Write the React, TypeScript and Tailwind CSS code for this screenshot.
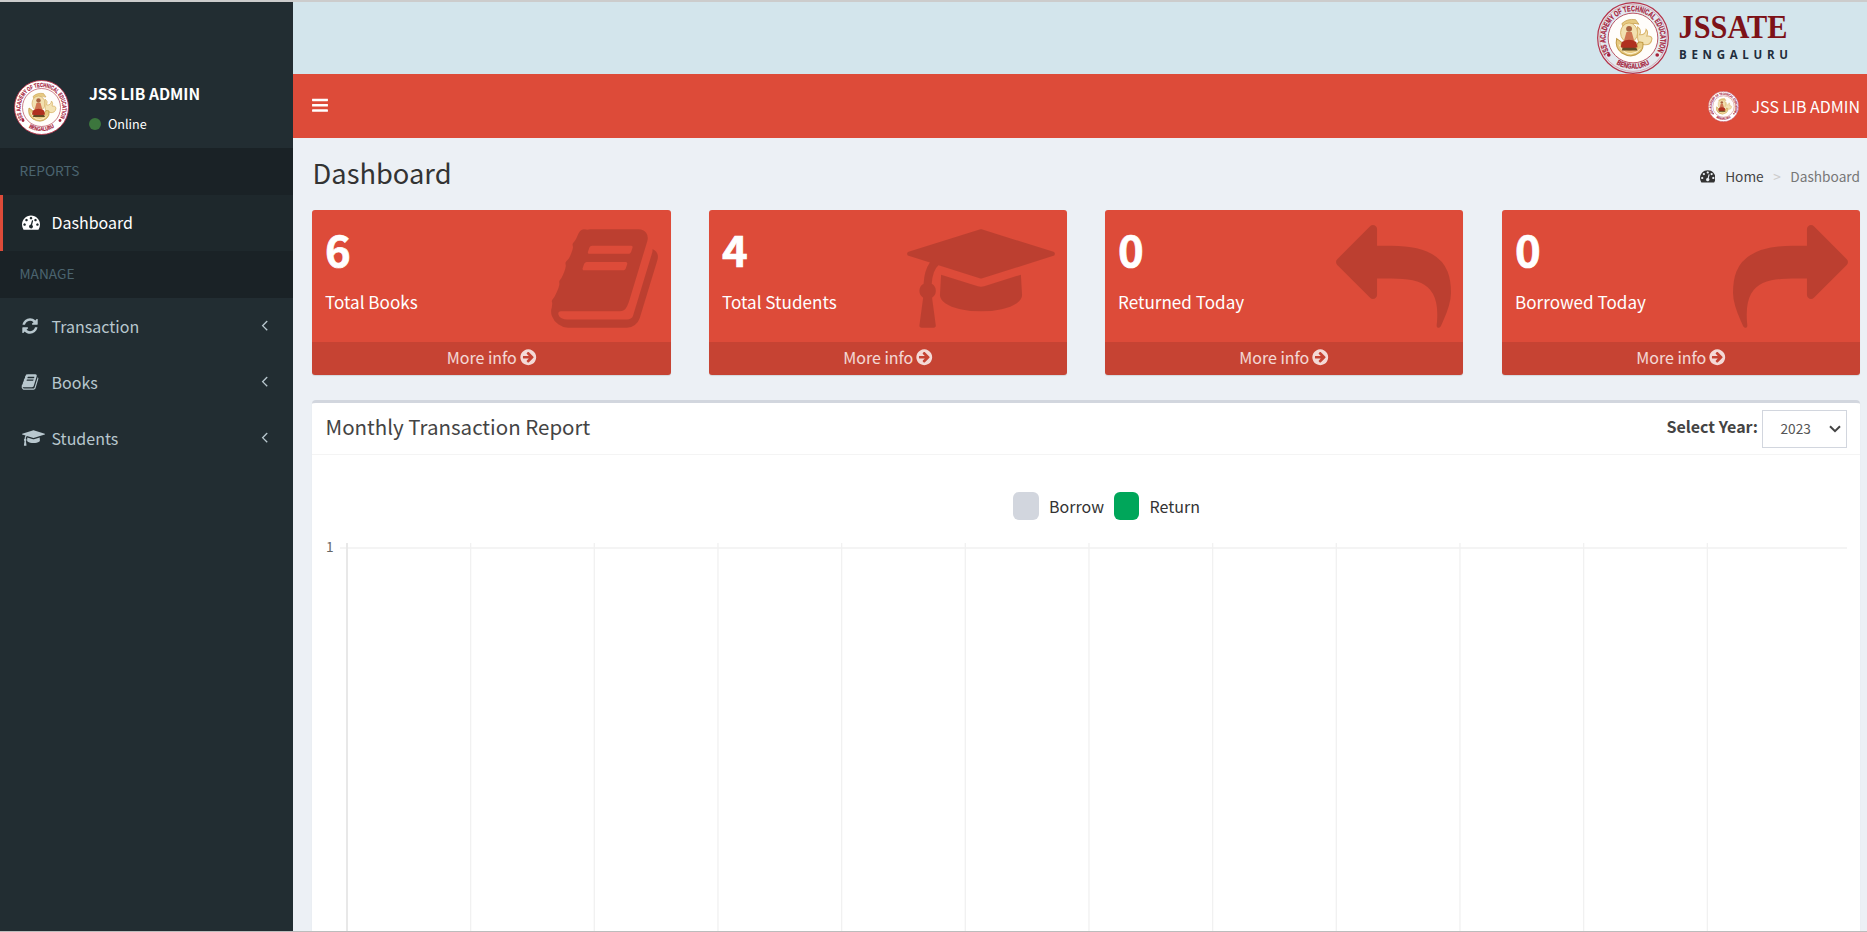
import type { ReactNode } from "react";

type IconName = "dashboard" | "refresh" | "book" | "cap" | "arrowCircle" | "reply" | "share" | "angleLeft" | "bars";

const ICONS: Record<IconName, { width: number; path: string }> = {
  dashboard: {
    width: 1792,
    path: "M384 1152q0-53-37.5-90.5t-90.5-37.5-90.5 37.5-37.5 90.5 37.5 90.5 90.5 37.5 90.5-37.5 37.5-90.5zm192-448q0-53-37.5-90.5t-90.5-37.5-90.5 37.5-37.5 90.5 37.5 90.5 90.5 37.5 90.5-37.5 37.5-90.5zm428 481l101-382q6-26-7.5-48.5t-38.5-29.5-48 6.5-30 39.5l-101 382q-60 5-107 43.5t-63 98.5q-20 77 20 146t117 89 146-20 89-117q16-60-6-117t-72-91zm660-33q0-53-37.5-90.5t-90.5-37.5-90.5 37.5-37.5 90.5 37.5 90.5 90.5 37.5 90.5-37.5 37.5-90.5zm-640-640q0-53-37.5-90.5t-90.5-37.5-90.5 37.5-37.5 90.5 37.5 90.5 90.5 37.5 90.5-37.5 37.5-90.5zm448 192q0-53-37.5-90.5t-90.5-37.5-90.5 37.5-37.5 90.5 37.5 90.5 90.5 37.5 90.5-37.5 37.5-90.5zm320 448q0 261-141 483-19 29-54 29h-1402q-35 0-54-29-141-221-141-483 0-182 71-348t191-286 286-191 348-71 348 71 286 191 191 286 71 348z",
  },
  refresh: {
    width: 1792,
    path: "M1639 1056q0 5-1 7-64 268-268 434.5t-478 166.5q-146 0-282.5-55t-243.5-157l-129 129q-19 19-45 19t-45-19-19-45v-448q0-26 19-45t45-19h448q26 0 45 19t19 45-19 45l-137 137q71 66 161 102t187 36q134 0 250-65t186-179q11-17 53-117 8-23 30-23h192q13 0 22.5 9.5t9.5 22.5zm25-800v448q0 26-19 45t-45 19h-448q-26 0-45-19t-19-45 19-45l138-138q-148-137-349-137-134 0-250 65t-186 179q-11 17-53 117-8 23-30 23h-199q-13 0-22.5-9.5t-9.5-22.5v-7q65-268 270-434.5t480-166.5q146 0 284 55.5t245 156.5l130-129q19-19 45-19t45 19 19 45z",
  },
  book: {
    width: 1792,
    path: "M1703 478q40 57 18 129l-275 906q-19 64-76.5 107.5t-122.5 43.5h-923q-77 0-148.5-53.5t-99.5-131.5q-24-67-2-127 0-4 3-27t4-37q1-8-3-21.5t-3-19.5q2-11 8-21t16.5-23.5 16.5-23.5q23-38 45-91.5t30-91.5q3-10 .5-30t-.5-28q3-11 17-28t17-23q21-36 42-92t25-90q1-9-2.5-32t.5-28q4-13 22-30.5t22-22.5q19-26 42.5-84.5t27.5-96.5q1-8-3-25.5t-2-26.5q2-8 9-18t18-23 17-21q8-12 16.5-30.5t15-35 16-36 19.5-32 26.5-23.5 36-11.5 47.5 5.5l-1 3q38-9 51-9h761q74 0 114 56t18 130l-274 906q-36 119-71.5 153.5t-128.5 34.5h-869q-27 0-38 15-11 16-1 43 24 70 144 70h923q29 0 56-15.5t35-41.5l300-987q7-22 5-57 38 15 59 43zm-1064 2q-4 13 2 22.5t20 9.5h608q13 0 25.5-9.5t16.5-22.5l21-64q4-13-2-22.5t-20-9.5h-608q-13 0-25.5 9.5t-16.5 22.5zm-83 256q-4 13 2 22.5t20 9.5h608q13 0 25.5-9.5t16.5-22.5l21-64q4-13-2-22.5t-20-9.5h-608q-13 0-25.5 9.5t-16.5 22.5z",
  },
  cap: {
    width: 2304,
    path: "M1774 836l18 316q4 69-82 128t-235 93.5-323 34.5-323-34.5-235-93.5-82-128l18-316 574 181q22 7 48 7t48-7zm530-324q0 23-22 31l-1120 352q-4 1-10 1t-10-1l-652-206q-43 34-71 111.5t-34 178.5q63 36 63 109 0 69-58 107l58 433q2 14-8 25-9 11-24 11h-192q-15 0-24-11-10-11-8-25l58-433q-58-38-58-107 0-73 65-111 11-207 98-330l-333-104q-22-8-22-31t22-31l1120-352q4-1 10-1t10 1l1120 352q22 8 22 31z",
  },
  arrowCircle: {
    width: 1792,
    path: "M1413 896q0-27-18-45l-91-91-362-362q-18-18-45-18t-45 18l-91 91q-18 18-18 45t18 45l189 189h-502q-26 0-45 19t-19 45v128q0 26 19 45t45 19h502l-189 189q-19 19-19 45t19 45l91 91q18 18 45 18t45-18l362-362 91-91q18-18 18-45zm251 0q0 209-103 385.5t-279.5 279.5-385.5 103-385.5-103-279.5-279.5-103-385.5 103-385.5 279.5-279.5 385.5-103 385.5 103 279.5 279.5 103 385.5z",
  },
  reply: {
    width: 1792,
    path: "M1792 1120q0 166-127 451-3 7-10.5 24t-13.5 30-13 22q-12 17-28 17-15 0-23.5-10t-8.5-25q0-9 2.5-26.5t2.5-23.5q5-68 5-123 0-101-17.5-181t-48.5-138.5-80-101-105.5-69.5-133-42.5-154-21.5-175.5-6h-224v256q0 26-19 45t-45 19-45-19l-512-512q-19-19-19-45t19-45l512-512q19-19 45-19t45 19 19 45v256h224q713 0 875 403 53 134 53 333z",
  },
  share: {
    width: 1792,
    path: "M1792 640q0 26-19 45l-512 512q-19 19-45 19t-45-19-19-45v-256h-224q-98 0-175.5 6t-154 21.5-133 42.5-105.5 69.5-80 101-48.5 138.5-17.5 181q0 55 5 123 0 6 2.5 23.5t2.5 26.5q0 15-8.5 25t-23.5 10q-16 0-28-17-7-9-13-22t-13.5-30-10.5-24q-127-285-127-451 0-199 53-333 162-403 875-403h224v-256q0-26 19-45t45-19 45 19l512 512q19 19 19 45z",
  },
  angleLeft: {
    width: 640,
    path: "M627 544q0 13-10 23l-393 393 393 393q10 10 10 23t-10 23l-50 50q-10 10-23 10t-23-10l-466-466q-10-10-10-23t10-23l466-466q10-10 23-10t23 10l50 50q10 10 10 23z",
  },
  bars: {
    width: 1536,
    path: "M1536 1344v128q0 26-19 45t-45 19h-1408q-26 0-45-19t-19-45v-128q0-26 19-45t45-19h1408q26 0 45 19t19 45zm0-512v128q0 26-19 45t-45 19h-1408q-26 0-45-19t-19-45v-128q0-26 19-45t45-19h1408q26 0 45 19t19 45zm0-512v128q0 26-19 45t-45 19h-1408q-26 0-45-19t-19-45v-128q0-26 19-45t45-19h1408q26 0 45 19t19 45z",
  },
};

function Icon({ name, className }: { name: IconName; className: string }) {
  const icon = ICONS[name];
  return (
    <svg viewBox={`0 0 ${icon.width} 1792`} className={`shrink-0 ${className}`} fill="currentColor" aria-hidden="true">
      <path d={icon.path} />
    </svg>
  );
}

function Seal({ id, className, filled }: { id: string; className: string; filled?: boolean }) {
  return (
    <svg viewBox="0 0 110 110" className={`shrink-0 ${className}`}>
      <defs>
        <path id={`${id}-top`} d="M22 82A42 42 0 1 1 88 82" fill="none" />
        <path id={`${id}-bottom`} d="M22 89A48 48 0 0 0 88 89" fill="none" />
      </defs>
      <circle cx="55" cy="55" r="54" fill={filled ? "#ffffff" : "#dde3ea"} stroke="#b5334a" strokeWidth="1.8" />
      <circle cx="55" cy="55" r="51" fill={filled ? "#ffffff" : "#e3e9ef"} stroke={filled ? "none" : "#cf8f9b"} strokeWidth="1" />
      <circle cx="55" cy="55" r="38" fill="#fffdfa" stroke="#b5485a" strokeWidth="1.4" />
      <g fill="#a5203a" stroke="#a5203a" strokeWidth="0.35" fontFamily="'Liberation Sans Narrow', 'Liberation Sans', sans-serif" fontWeight="700" fontSize="12">
        <text textLength="176" lengthAdjust="spacingAndGlyphs">
          <textPath href={`#${id}-top`} startOffset="2%">JSS ACADEMY OF TECHNICAL EDUCATION</textPath>
        </text>
        <text textAnchor="middle" fontSize="11" textLength="54" lengthAdjust="spacingAndGlyphs">
          <textPath href={`#${id}-bottom`} startOffset="50%">BENGALURU</textPath>
        </text>
      </g>
      <circle cx="18" cy="81" r="2.8" fill="#a5203a" />
      <circle cx="92" cy="81" r="2.8" fill="#a5203a" />
      <path d="M38 33q8-8 21-6l5 7q-12-4-24 4z" fill="#e6c981" stroke="#c7a04f" strokeWidth="1.2" />
      <ellipse cx="49" cy="47" rx="13" ry="15" fill="#f2e0b0" stroke="#d3ac5c" strokeWidth="1.3" />
      <path d="M62 38q7 5 3 12q9 1 10-8q4 4 1 10q7-1 8 4q-1 11-13 9q-9-1-9-11z" fill="#f3e2b3" stroke="#d9b66e" strokeWidth="1.6" />
      <path d="M30 56q-3 14 8 22q15 9 27-1q7-6 5-15q-8-3-9 4q-4 8-14 7q-10-2-10-12z" fill="#e6c981" stroke="#c19a45" strokeWidth="1.6" />
      <path d="M34 65q5 14 18 14q10-1 14-8" fill="none" stroke="#fff6d8" strokeWidth="1.5" />
      <circle cx="49" cy="41" r="4.5" fill="#a8613f" />
      <path d="M45 46h8l4 14h-16z" fill="#cf7452" />
      <path d="M38 61q11-7 22 0l2 8q-13 4-26 0z" fill="#b0301f" />
      <path d="M39 70h21l2 4h-24z" fill="#5f4a25" />
    </svg>
  );
}

function SectionHeader({ children }: { children: ReactNode }) {
  return <li className="flex h-[47px] items-center bg-[#1a2226] pb-[2px] pl-[19.5px] text-[13.7px] text-[#4b646f]">{children}</li>;
}

function MenuItem({ icon, wide, label }: { icon: IconName; wide?: boolean; label: string }) {
  return (
    <li className="flex h-14 items-center pr-[25px] pl-[22px] text-base text-[#b8c7ce]">
      <span className="flex w-[29.5px] items-center">
        <Icon name={icon} className={wide ? "h-[18px] w-[23px]" : "-ml-px h-[18px] w-[18px]"} />
      </span>
      <span>{label}</span>
      <Icon name="angleLeft" className="mb-[3px] ml-auto h-[18px] w-[7px]" />
    </li>
  );
}

function Sidebar() {
  return (
    <aside className="w-[293px] shrink-0 bg-[#222d32] pt-[72px]">
      <div className="flex h-[74px] pl-[14px]">
        <Seal id="side" filled className="mt-[5.5px] h-[55px] w-[55px]" />
        <div className="ml-5 flex flex-col text-white">
          <p className="mt-2 text-[15.6px] leading-[23px] font-semibold">JSS LIB ADMIN</p>
          <p className="mt-[11px] flex items-center text-[12.6px] leading-4">
            <span className="mr-[7px] h-3 w-3 rounded-full bg-[#3c763d]" />
            Online
          </p>
        </div>
      </div>
      <ul>
        <SectionHeader>REPORTS</SectionHeader>
        <li className="flex h-14 items-center border-l-[3px] border-[#dd4b39] bg-[#1e282c] pb-[2px] pl-[19px] text-base text-white">
          <Icon name="dashboard" className="mr-[11.5px] h-[18px] w-[18px]" />
          Dashboard
        </li>
        <SectionHeader>MANAGE</SectionHeader>
        <MenuItem icon="refresh" label="Transaction" />
        <MenuItem icon="book" label="Books" />
        <MenuItem icon="cap" wide label="Students" />
      </ul>
    </aside>
  );
}

function StatCard({ value, label, icon, iconClass }: { value: number; label: string; icon: IconName; iconClass: string }) {
  return (
    <div className="relative flex h-[165px] flex-col overflow-hidden rounded-[3px] bg-[#dd4b39] text-white shadow-[0_1px_1px_rgba(0,0,0,0.1)]">
      <div className="flex-1 pl-[13px]">
        <p className="pt-[13px] text-[43.6px] leading-[50px] font-bold [-webkit-text-stroke:0.7px_white]">{value}</p>
        <p className="mt-[17px] text-[17.1px] leading-6">{label}</p>
      </div>
      <Icon name={icon} className={`absolute top-[10.5px] h-[115px] text-black/15 ${iconClass}`} />
      <a className="flex h-[33px] items-center justify-center gap-[3px] bg-black/10 pb-[3px] pl-px text-base text-white/80">
        More info
        <Icon name="arrowCircle" className="mt-px -ml-px h-[18.5px] w-[18.5px]" />
      </a>
    </div>
  );
}

const GRID_LINES = Array.from({ length: 11 }, (_, i) => 34.8 + (i + 1) * 123.67);

function Chart() {
  return (
    <div className="flex flex-1 flex-col">
      <div className="flex h-[88px] justify-center pt-[37px] pl-[41px] text-base text-[#333]">
        <span className="mr-[10px] h-7 w-[26px] rounded-md bg-[#d2d6de]" />
        <span className="mr-[10px] leading-[29px]">Borrow</span>
        <span className="mr-[10.5px] h-7 w-[25px] rounded-md bg-[#00a65a]" />
        <span className="leading-[29px]">Return</span>
      </div>
      <div className="flex">
        <span className="-mt-1 w-7 pl-[14px] text-[13.7px] leading-[14px] text-[#666]">1</span>
        <svg className="-ml-7 h-[389px] w-[1548px]" viewBox="0 0 1548 389">
          <rect x="28" y="4" width="1507" height="2" fill="#f4f4f4" />
          <rect x="34" y="0" width="2" height="389" fill="#e8e8e8" />
          {GRID_LINES.map((x) => (
            <rect key={x} x={x - 0.5} y="0" width="1.3" height="389" fill="#f1f1f1" />
          ))}
        </svg>
      </div>
    </div>
  );
}

export default function App() {
  return (
    <div className="flex h-[932px] w-[1867px] flex-col overflow-hidden border-t-2 border-b border-t-[#cccccc] border-b-[#bcbcbc] bg-[#ecf0f5] [font-family:'Noto_Sans_CJK_SC','Noto_Sans_CJK_JP',sans-serif]">
      <div className="flex min-h-0 flex-1">
        <Sidebar />
        <div className="flex min-w-0 flex-1 flex-col">
          <div className="flex h-[72px] shrink-0 justify-end bg-[#d3e5ec] pr-[43px]">
            <Seal id="banner" className="h-[72px] w-[74px]" />
            <svg className="ml-[4px] h-[72px] w-[150px]" viewBox="0 0 150 72">
              <text x="4.5" y="35.5" textLength="109" lengthAdjust="spacingAndGlyphs" fontFamily="'Liberation Serif', serif" fontWeight="700" fontSize="33" fill="#7d1218">
                JSSATE
              </text>
              <text x="5" y="57" textLength="109" lengthAdjust="spacing" fontFamily="'Open Sans', sans-serif" fontWeight="700" fontSize="11.5" fill="#222d3c">
                BENGALURU
              </text>
            </svg>
          </div>
          <header className="flex h-16 shrink-0 items-center bg-[#dd4b39] pr-[7px] pb-px pl-[19px] text-white">
            <Icon name="bars" className="h-[18.5px] w-4" />
            <div className="ml-auto flex items-center pt-px">
              <Seal id="nav" filled className="mt-px h-[31px] w-[31px]" />
              <span className="ml-[13px] text-base">JSS LIB ADMIN</span>
            </div>
          </header>
          <main className="flex min-h-0 flex-1 flex-col pr-[7px] pl-[19px]">
            <div className="flex h-[72px] shrink-0 items-center justify-between">
              <h1 className="mb-1 ml-[0.5px] text-[27.3px] leading-9 text-[#333]">Dashboard</h1>
              <nav className="mt-[4.5px] flex items-center text-[13.7px] text-[#777]">
                <Icon name="dashboard" className="mr-[10px] h-[15.5px] w-[15.5px] text-[#333]" />
                <span className="text-[#444]">Home</span>
                <span className="mx-[9.5px] text-[13.7px] text-[#ccc]">&gt;</span>
                <span>Dashboard</span>
              </nav>
            </div>
            <div className="grid shrink-0 grid-cols-[359px_358px_358px_358px] gap-x-[38px]">
              <StatCard value={6} label="Total Books" icon="book" iconClass="right-[9px] w-[115px]" />
              <StatCard value={4} label="Total Students" icon="cap" iconClass="right-[12px] w-[148px]" />
              <StatCard value={0} label="Returned Today" icon="reply" iconClass="right-[12px] w-[115px]" />
              <div className="-mr-px ml-px">
                <StatCard value={0} label="Borrowed Today" icon="share" iconClass="right-[12px] w-[115px]" />
              </div>
            </div>
            <section className="mt-[25px] flex min-h-0 flex-1 flex-col rounded-t-[4px] border-t-[3px] border-[#d2d6de] bg-white shadow-[0_1px_1px_rgba(0,0,0,0.1)]">
              <div className="flex h-[52px] shrink-0 items-center justify-between border-b border-[#f4f4f4] pr-[13px] pl-[13.5px] text-[#444]">
                <h3 className="mb-[5px] text-[20.5px] leading-6">Monthly Transaction Report</h3>
                <div className="flex items-center">
                  <label className="mb-[6px] text-base font-bold">Select Year:</label>
                  <div className="ml-1 flex h-[38px] w-[85px] items-center justify-between border border-[#d2d6de] pr-[5px] pl-[17.5px] text-[13.7px] text-[#555]">
                    2023
                    <svg viewBox="0 0 12 8" className="mt-px h-2 w-3" fill="none" stroke="#444" strokeWidth="2">
                      <path d="M1 1.2l5 5 5-5" />
                    </svg>
                  </div>
                </div>
              </div>
              <Chart />
            </section>
          </main>
        </div>
      </div>
    </div>
  );
}
